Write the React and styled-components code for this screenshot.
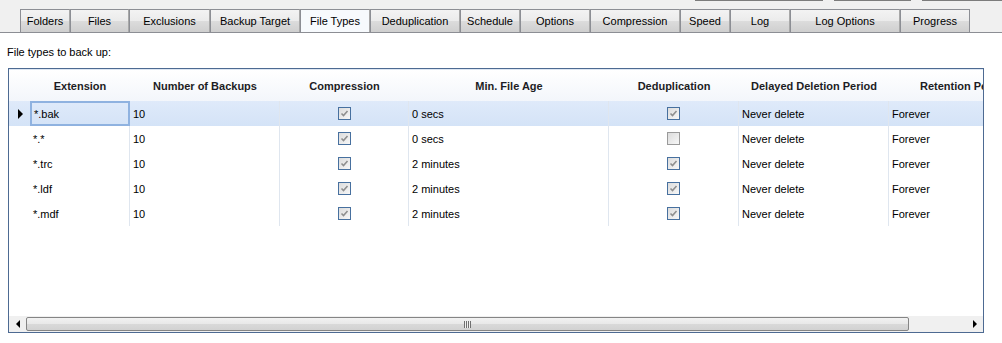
import React from 'react';
import styled, { createGlobalStyle } from 'styled-components';

const TABS = [
  { name: 'Folders', width: 50 },
  { name: 'Files', width: 59 },
  { name: 'Exclusions', width: 81 },
  { name: 'Backup Target', width: 90 },
  { name: 'File Types', width: 70, active: true },
  { name: 'Deduplication', width: 90 },
  { name: 'Schedule', width: 60 },
  { name: 'Options', width: 70 },
  { name: 'Compression', width: 90 },
  { name: 'Speed', width: 50 },
  { name: 'Log', width: 60 },
  { name: 'Log Options', width: 110 },
  { name: 'Progress', width: 70 },
];

const COLUMNS = [
  { key: 'ext', title: 'Extension', width: 100 },
  { key: 'count', title: 'Number of Backups', width: 150 },
  { key: 'compress', title: 'Compression', width: 129, check: true },
  { key: 'age', title: 'Min. File Age', width: 200 },
  { key: 'dedup', title: 'Deduplication', width: 130, check: true },
  { key: 'delay', title: 'Delayed Deletion Period', width: 150 },
  { key: 'retention', title: 'Retention Period', width: 150 },
];

const ROWS = [
  { ext: '*.bak', count: '10', compress: true, age: '0 secs', dedup: true, delay: 'Never delete', retention: 'Forever' },
  { ext: '*.*', count: '10', compress: true, age: '0 secs', dedup: false, delay: 'Never delete', retention: 'Forever' },
  { ext: '*.trc', count: '10', compress: true, age: '2 minutes', dedup: true, delay: 'Never delete', retention: 'Forever' },
  { ext: '*.ldf', count: '10', compress: true, age: '2 minutes', dedup: true, delay: 'Never delete', retention: 'Forever' },
  { ext: '*.mdf', count: '10', compress: true, age: '2 minutes', dedup: true, delay: 'Never delete', retention: 'Forever' },
];

const GlobalStyle = createGlobalStyle`
  body {
    margin: 0;
    background: #ffffff;
    font-family: "Liberation Sans", Arial, sans-serif;
    font-size: 11px;
    color: #000;
  }
`;

const Page = styled.div`
  width: 1002px;
  height: 343px;
  overflow: hidden;
`;

const TabStrip = styled.div`
  background: #f0f0f0;
  border-bottom: 1px solid #8c8e94;
  height: 32px;
  display: flex;
  flex-direction: column;
`;

const EdgeRow = styled.div`
  height: 9px;
  display: flex;
  align-items: flex-start;
  padding-left: 695px;
  gap: 11px;
`;

const EdgeBar = styled.div`
  width: ${(p) => p.w}px;
  height: 1px;
  background: #7c7c7c;
`;

const TabRow = styled.div`
  display: flex;
  padding-left: 20px;
  height: 23px;
`;

const Tab = styled.div`
  box-sizing: border-box;
  width: ${(p) => p.w}px;
  height: 23px;
  border: 1px solid #8c8e94;
  border-bottom: none;
  border-right-color: ${(p) => (p.last ? '#8c8e94' : '#a8a8a8')};
  background: ${(p) =>
    p.active
      ? '#f7fafd'
      : 'linear-gradient(#f3f3f3 0%, #ebebeb 50%, #dcdcdc 51%, #cfcfcf 100%)'};
  display: flex;
  align-items: center;
  justify-content: center;
  font-size: 11px;
  color: #000;
  white-space: nowrap;
`;

const Label = styled.div`
  box-sizing: border-box;
  height: 35px;
  padding: 13px 0 0 7px;
  line-height: 13px;
`;

const Grid = styled.div`
  box-sizing: border-box;
  margin-left: 8px;
  width: 976px;
  height: 265px;
  border: 1px solid #4d6a92;
  display: flex;
  flex-direction: column;
  overflow: hidden;
`;

const HeaderRow = styled.div`
  display: flex;
  height: 32px;
  flex-shrink: 0;
  border-top: 1px solid #dde6f2;
  box-sizing: border-box;
  background: linear-gradient(#ffffff, #f3f6fb);
`;

const RowHeadCell = styled.div`
  width: 21px;
  flex-shrink: 0;
  display: flex;
  align-items: center;
  justify-content: center;
`;

const HeadCell = styled.div`
  width: ${(p) => p.w}px;
  flex-shrink: 0;
  display: flex;
  align-items: center;
  justify-content: center;
  font-weight: bold;
  color: #1d1d24;
  white-space: nowrap;
`;

const Row = styled.div`
  display: flex;
  height: 25px;
  flex-shrink: 0;
  background: ${(p) => (p.selected ? 'linear-gradient(#dfeafa, #d4e3f7)' : '#ffffff')};
`;

const Cell = styled.div`
  box-sizing: border-box;
  width: ${(p) => p.w}px;
  flex-shrink: 0;
  display: flex;
  align-items: center;
  justify-content: ${(p) => (p.center ? 'center' : 'flex-start')};
  padding-left: ${(p) => (p.center ? 0 : 3)}px;
  border-right: 1px solid #dfe6ef;
  white-space: nowrap;
  ${(p) => p.current && 'border: 2px solid #8fb2e0; padding-left: 2px;'}
`;

const RowArrow = styled.div`
  width: 0;
  height: 0;
  border-left: 5px solid #000;
  border-top: 5px solid transparent;
  border-bottom: 5px solid transparent;
  margin-left: 2px;
`;

const Box = styled.div`
  box-sizing: border-box;
  width: 13px;
  height: 13px;
  border: 1px solid ${(p) => (p.checked ? '#47709f' : '#9a9a9a')};
  background: linear-gradient(135deg, #dcdcdc, #f7f7f7);
  display: flex;
  align-items: center;
  justify-content: center;
`;

const Filler = styled.div`
  flex: 1;
`;

const HScroll = styled.div`
  height: 16px;
  flex-shrink: 0;
  display: flex;
  align-items: stretch;
  background: #f0f0f0;
`;

const ScrollButton = styled.div`
  width: 17px;
  flex-shrink: 0;
  display: flex;
  align-items: center;
  justify-content: center;
`;

const Arrow = styled.div`
  width: 0;
  height: 0;
  border-top: 4px solid transparent;
  border-bottom: 4px solid transparent;
  ${(p) => (p.dir === 'left' ? 'border-right: 4px solid #000;' : 'border-left: 4px solid #000;')}
`;

const Track = styled.div`
  flex: 1;
  display: flex;
  padding: 1px 0;
`;

const Thumb = styled.div`
  box-sizing: border-box;
  width: 883px;
  border: 1px solid #858585;
  border-radius: 2px;
  background: linear-gradient(#f2f2f2 0%, #e8e8e8 50%, #d9d9d9 51%, #d2d2d2 100%);
  display: flex;
  align-items: center;
  justify-content: center;
`;

const Grip = styled.div`
  width: 7px;
  height: 7px;
  background: repeating-linear-gradient(90deg, #707070 0 1px, #f0f0f0 1px 2px);
`;

const CheckBox = ({ checked }) => (
  <Box checked={checked}>
    {checked && (
      <svg width="9" height="9" viewBox="0 0 9 9">
        <path d="M1.5 4.5 L3.5 6.5 L7.5 2" fill="none" stroke="#8f8f8f" strokeWidth="1.6" />
      </svg>
    )}
  </Box>
);

const App = () => (
  <Page>
    <GlobalStyle />
    <TabStrip>
      <EdgeRow>
        <EdgeBar w={128} />
        <EdgeBar w={78} />
        <EdgeBar w={80} />
      </EdgeRow>
      <TabRow>
        {TABS.map((tab, i) => (
          <Tab key={tab.name} w={tab.width} active={tab.active} last={i === TABS.length - 1}>
            {tab.name}
          </Tab>
        ))}
      </TabRow>
    </TabStrip>
    <Label>File types to back up:</Label>
    <Grid>
      <HeaderRow>
        <RowHeadCell />
        {COLUMNS.map((col) => (
          <HeadCell key={col.key} w={col.width}>
            {col.title}
          </HeadCell>
        ))}
      </HeaderRow>
      {ROWS.map((row, r) => (
        <Row key={row.ext} selected={r === 0}>
          <RowHeadCell>{r === 0 && <RowArrow />}</RowHeadCell>
          {COLUMNS.map((col, c) => (
            <Cell key={col.key} w={col.width} center={col.check} current={r === 0 && c === 0}>
              {col.check ? <CheckBox checked={row[col.key]} /> : row[col.key]}
            </Cell>
          ))}
        </Row>
      ))}
      <Filler />
      <HScroll>
        <ScrollButton>
          <Arrow dir="left" />
        </ScrollButton>
        <Track>
          <Thumb>
            <Grip />
          </Thumb>
        </Track>
        <ScrollButton>
          <Arrow dir="right" />
        </ScrollButton>
      </HScroll>
    </Grid>
  </Page>
);

export default App;
